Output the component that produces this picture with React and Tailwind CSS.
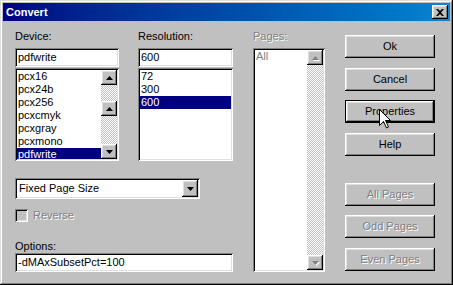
const raised = 'shadow-[inset_-1px_-1px_#000,inset_1px_1px_#fff,inset_-2px_-2px_#808080,inset_2px_2px_#dfdfdf]';
const sunken = 'shadow-[inset_1px_1px_#808080,inset_-1px_-1px_#fff,inset_2px_2px_#000,inset_-2px_-2px_#dfdfdf]';
const dither = 'bg-[repeating-conic-gradient(#fff_0%_25%,#c0c0c0_0%_50%)] bg-[length:2px_2px]';
const emboss = 'text-[#808080] [text-shadow:1px_1px_0_#fff]';

function Arrow({ down, disabled }) {
  return (
    <svg width="7" height="4" viewBox="0 0 7 4" className={disabled ? 'drop-shadow-[1px_1px_0_#fff]' : ''}>
      <polygon points={down ? '0,0 7,0 3.5,4' : '3.5,0 7,4 0,4'} fill={disabled ? '#808080' : '#000'} />
    </svg>
  );
}

function ScrollBtn({ down, disabled, h = 'h-[15px]' }) {
  return (
    <div className={`w-[16px] ${h} bg-[#c0c0c0] ${raised} flex items-center justify-center shrink-0`}>
      <Arrow down={down} disabled={disabled} />
    </div>
  );
}

function ListBox({ items, selected, className, scroll }) {
  return (
    <div className={`bg-white ${sunken} p-[2px] flex ${className}`}>
      <div className="flex-1 min-w-0 overflow-hidden">
        {items.map((it) => (
          <div
            key={it}
            className={`h-[13px] leading-[12px] pl-[1px] ${it === selected ? 'bg-[#000080] text-white' : ''}`}
          >
            {it}
          </div>
        ))}
      </div>
      {scroll}
    </div>
  );
}

function Button({ children, disabled, focused, className = '' }) {
  if (focused) {
    return (
      <div className={`h-[23px] border border-black ${className}`}>
        <div className={`h-full bg-[#c0c0c0] ${raised} flex items-center justify-center`}>{children}</div>
      </div>
    );
  }
  return (
    <div className={`h-[23px] bg-[#c0c0c0] ${raised} flex items-center justify-center ${disabled ? emboss : ''} ${className}`}>
      {children}
    </div>
  );
}

export default function App() {
  return (
    <div className="relative w-[453px] h-[285px] bg-[#c0c0c0] p-[3px] text-[11px] leading-[13px] text-black font-['Liberation_Sans',Arial,sans-serif] shadow-[inset_-1px_-1px_#000,inset_1px_1px_#dfdfdf,inset_-2px_-2px_#808080,inset_2px_2px_#fff]">
      <div className="h-[18px] flex items-center justify-between pl-[3px] pr-[2px] bg-gradient-to-r from-[#000080] to-[#1084d0]">
        <span className="text-white font-bold">Convert</span>
        <div className={`w-[16px] h-[14px] bg-[#c0c0c0] ${raised} flex items-center justify-center`}>
          <svg width="8" height="7" viewBox="0 0 8 7">
            <path d="M0 0h2l2 2 2-2h2L5 3.5 8 7H6L4 5 2 7H0l3-3.5z" fill="#000" />
          </svg>
        </div>
      </div>

      <div className="flex pl-[12px] pt-[9px]">
        <div className="w-[218px] flex flex-col">
          <div className="flex gap-[19px]">
            <div className="w-[104px] flex flex-col">
              <div className="h-[13px]">Device:</div>
              <div className={`mt-[5px] h-[19px] bg-white ${sunken} pl-[3px] flex items-center`}>pdfwrite</div>
              <ListBox
                className="mt-[1px] h-[93px]"
                items={['pcx16', 'pcx24b', 'pcx256', 'pcxcmyk', 'pcxgray', 'pcxmono', 'pdfwrite']}
                selected="pdfwrite"
                scroll={
                  <div className={`w-[16px] flex flex-col ${dither}`}>
                    <ScrollBtn />
                    <div className="h-[16px]" />
                    <ScrollBtn />
                    <div className="flex-1" />
                    <ScrollBtn down />
                  </div>
                }
              />
            </div>
            <div className="w-[95px] flex flex-col">
              <div className="h-[13px]">Resolution:</div>
              <div className={`mt-[5px] h-[19px] bg-white ${sunken} pl-[3px] flex items-center`}>600</div>
              <ListBox className="mt-[1px] h-[93px]" items={['72', '300', '600']} selected="600" />
            </div>
          </div>

          <div className={`mt-[17px] w-[185px] h-[21px] bg-white ${sunken} p-[2px] flex items-center`}>
            <span className="flex-1 pl-[2px]">Fixed Page Size</span>
            <ScrollBtn down h="h-[17px]" />
          </div>

          <div className="mt-[10px] h-[13px] flex items-center gap-[5px]">
            <div className={`w-[13px] h-[13px] bg-[#c0c0c0] ${sunken}`} />
            <span className={emboss}>Reverse</span>
          </div>

          <div className="mt-[18px] h-[13px]">Options:</div>
          <div className={`h-[19px] bg-white ${sunken} pl-[3px] flex items-center`}>-dMAxSubsetPct=100</div>
        </div>

        <div className="ml-[20px] w-[72px] flex flex-col">
          <div className={`h-[13px] ${emboss}`}>Pages:</div>
          <ListBox
            className="mt-[5px] h-[224px] text-[#808080]"
            items={['All']}
            scroll={
              <div className={`w-[16px] flex flex-col ${dither}`}>
                <ScrollBtn disabled />
                <div className="flex-1" />
                <ScrollBtn down disabled />
              </div>
            }
          />
        </div>

        <div className="ml-[20px] w-[90px] mt-[5px] flex flex-col">
          <Button>Ok</Button>
          <Button className="mt-[10px]">Cancel</Button>
          <Button focused className="mt-[9px]">Properties</Button>
          <Button className="mt-[10px]">Help</Button>
          <Button disabled className="mt-[27px]">All Pages</Button>
          <Button disabled className="mt-[9px]">Odd Pages</Button>
          <Button disabled className="mt-[10px]">Even Pages</Button>
        </div>
      </div>

      <svg className="absolute left-[379px] top-[109px]" width="12" height="20" viewBox="0 0 12 20">
        <polygon points="0.5,0.5 0.5,16.5 4.5,12.5 7.5,19 9.5,18 6.5,11.5 11.5,11.5" fill="#fff" stroke="#000" strokeWidth="1" />
      </svg>
    </div>
  );
}
